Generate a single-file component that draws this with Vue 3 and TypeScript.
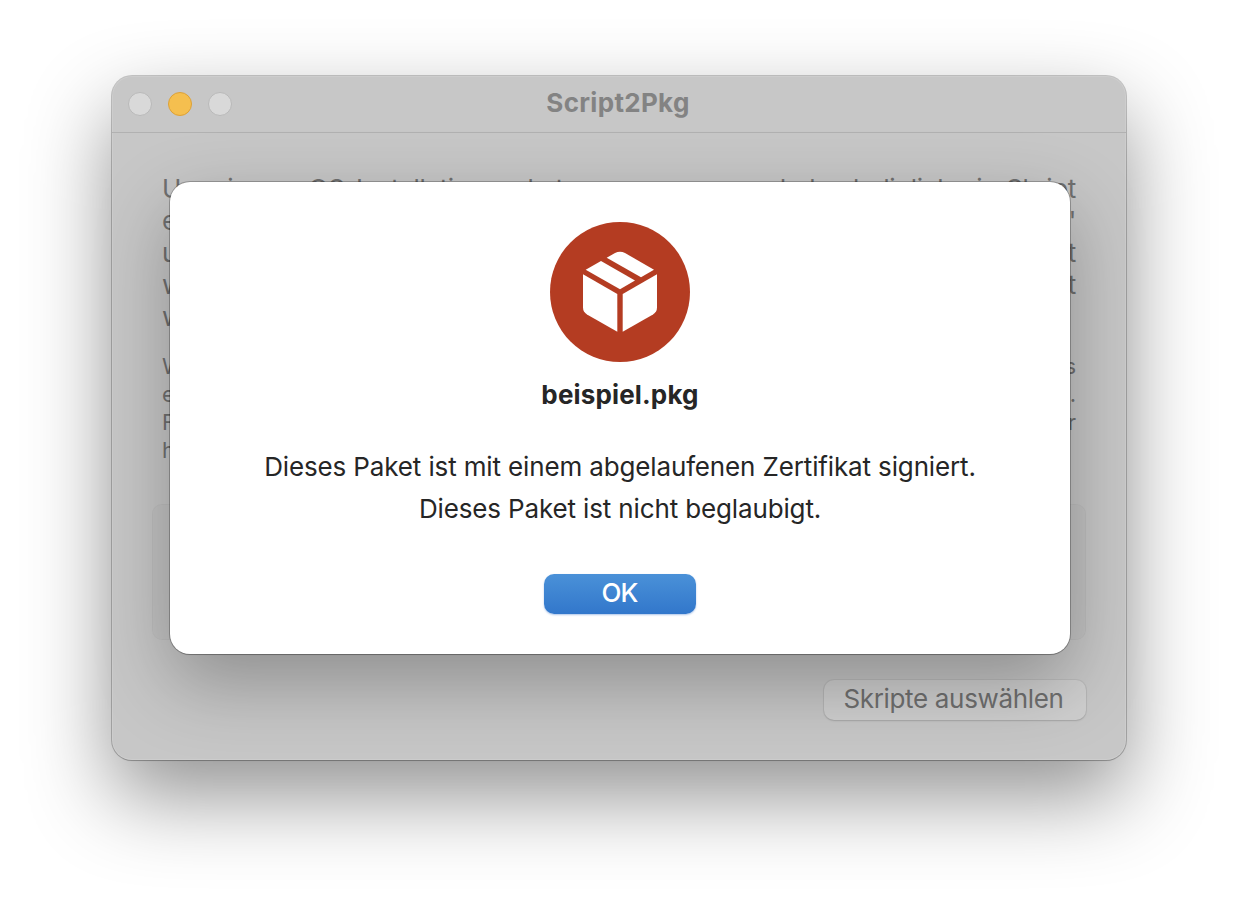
<script setup lang="ts">
const intro: string[] = [
  'Um ein macOS-Installationspaket zu erzeugen, und also lediglich ein Skript',
  'erstellt als ausführbare Datei mit dem Namen "preinstall" oder "postinstall"',
  'und ohne Endung gespeichert werden. Das fertige Installationspaket enthält',
  'weitere Dateien aus diesem Ordner, auf die vom jeweiligen Skript aus mit',
  'w',
]
const hint: string[] = [
  'Wenn das Paket signiert werden soll, muss im Schlüsselbund ein Zertifikat des',
  'entsprechenden Entwicklers vorhanden sein, das für die Installation gilt.',
  'Für die Beglaubigung werden zusätzlich die Zugangsdaten des Kontos oder',
  'h',
]
const messages: string[] = [
  'Dieses Paket ist mit einem abgelaufenen Zertifikat signiert.',
  'Dieses Paket ist nicht beglaubigt.',
]
</script>

<template>
  <main class="desktop">
    <section class="window">
      <header class="titlebar">
        <div class="lights">
          <span class="light"></span>
          <span class="light minimize"></span>
          <span class="light"></span>
        </div>
        <h1 class="title">Script2Pkg</h1>
      </header>
      <div class="content">
        <div class="intro">
          <p v-for="line in intro" :key="line">{{ line }}</p>
        </div>
        <div class="hint">
          <p v-for="line in hint" :key="line">{{ line }}</p>
        </div>
        <div class="dropbox"></div>
        <button class="choose"><span>Skripte auswählen</span></button>
      </div>
      <div class="sheet" role="dialog">
        <svg class="icon" viewBox="0 0 140 140" width="140" height="140">
          <circle cx="70" cy="70" r="70" fill="#b43c22" />
          <g fill="#fff">
            <path d="M56.7 35.8 L65 31 Q70 28.4 75 31 L104 47.7 L91 55.2 Z" />
            <path d="M35.7 47.7 L51 39 L85 58.5 L70 67.2 Z" />
            <path d="M33 52.3 L67.3 72 V109.8 L37 92.4 Q33 90 33 85.5 Z" />
            <path d="M107 52.3 L72.7 72 V109.8 L103 92.4 Q107 90 107 85.5 Z" />
          </g>
        </svg>
        <h2 class="filename">beispiel.pkg</h2>
        <p v-for="message in messages" :key="message" class="message">{{ message }}</p>
        <button class="ok">OK</button>
      </div>
    </section>
  </main>
</template>

<style>
body {
  margin: 0;
  background: #fff;
}
</style>

<style scoped>
* {
  box-sizing: border-box;
}
.desktop {
  width: 1238px;
  height: 908px;
  padding: 76px 112px 0;
  overflow: hidden;
  background: #fff;
  font-family: Inter, 'Liberation Sans', sans-serif;
}
h1,
h2,
p {
  margin: 0;
}
button {
  border: 0;
  padding: 0;
  font: inherit;
}
.window {
  position: relative;
  width: 1014px;
  height: 684px;
  border-radius: 20px;
  background: #c7c7c7;
  box-shadow:
    0 0 0 1px rgba(0, 0, 0, 0.2),
    0 1px 1px rgba(0, 0, 0, 0.12),
    inset 0 0 0 1px rgba(255, 255, 255, 0.12),
    0 36px 84px rgba(0, 0, 0, 0.43);
}
.titlebar {
  display: grid;
  grid-template-columns: 200px 1fr 200px;
  align-items: center;
  height: 57px;
  border-bottom: 1px solid #b1b1b1;
}
.lights {
  display: flex;
  gap: 16px;
  padding-left: 16px;
}
.light {
  width: 24px;
  height: 24px;
  border: 1px solid #b9b9b9;
  border-radius: 50%;
  background: #d9d9d9;
}
.minimize {
  border-color: #dda137;
  background: #f5bf4f;
}
.title {
  text-align: center;
  font-size: 26px;
  line-height: 32px;
  font-weight: 700;
  letter-spacing: 0.32px;
  color: #838383;
  padding: 0 2px 2px 0;
}
.content {
  display: flex;
  flex-direction: column;
  padding: 40px 40px 0;
  color: #707070;
}
.intro,
.hint {
  width: 914px;
  margin-left: 10px;
}
.intro p,
.hint p {
  white-space: nowrap;
  text-align-last: justify;
}
.intro p {
  height: 32px;
  font-size: 26px;
  line-height: 32px;
  letter-spacing: -0.3px;
}
.intro p:first-child {
  letter-spacing: -0.36px;
}
.hint {
  margin-top: 19px;
}
.hint p {
  height: 28px;
  font-size: 22px;
  line-height: 28px;
}
.intro p:last-child,
.hint p:last-child {
  text-align-last: left;
}
.dropbox {
  height: 136px;
  margin-top: 40px;
  border: 1px solid rgba(0, 0, 0, 0.03);
  border-radius: 10px;
  background: rgba(0, 0, 0, 0.015);
}
.choose {
  align-self: flex-end;
  width: 262px;
  height: 40px;
  margin-top: 40px;
  border-radius: 10px;
  background: #cfcfcf;
  box-shadow:
    0 0 0 1px rgba(0, 0, 0, 0.05),
    0 1px 2px rgba(0, 0, 0, 0.12);
  color: #707070;
  font-size: 26px;
  line-height: 36px;
  padding: 0 3px 2px 0;
  letter-spacing: -0.33px;
  white-space: nowrap;
}
.sheet {
  position: absolute;
  top: 106px;
  left: 58px;
  display: flex;
  flex-direction: column;
  align-items: center;
  width: 900px;
  height: 472px;
  padding-top: 40px;
  border-radius: 20px;
  background: #fff;
  box-shadow:
    0 0 0 1px rgba(0, 0, 0, 0.24),
    0 1px 1px rgba(0, 0, 0, 0.12),
    0 28px 76px rgba(0, 0, 0, 0.29);
  color: #262626;
}
.icon {
  display: block;
  flex: none;
}
.filename {
  margin: 17px 0 40px;
  font-size: 26px;
  line-height: 32px;
  font-weight: 700;
  letter-spacing: 0.15px;
}
.message {
  height: 42px;
  font-size: 26px;
  line-height: 32px;
  letter-spacing: -0.14px;
  white-space: nowrap;
}
.ok {
  width: 152px;
  height: 40px;
  margin-top: 39px;
  border-radius: 10px;
  background: linear-gradient(#4a91d8, #3277cb);
  box-shadow: 0 1px 2px rgba(50, 110, 200, 0.4);
  color: #fff;
  font-size: 26px;
  font-weight: 500;
  line-height: 36px;
  padding: 0 1px 2px 0;
  letter-spacing: -0.8px;
}
</style>
